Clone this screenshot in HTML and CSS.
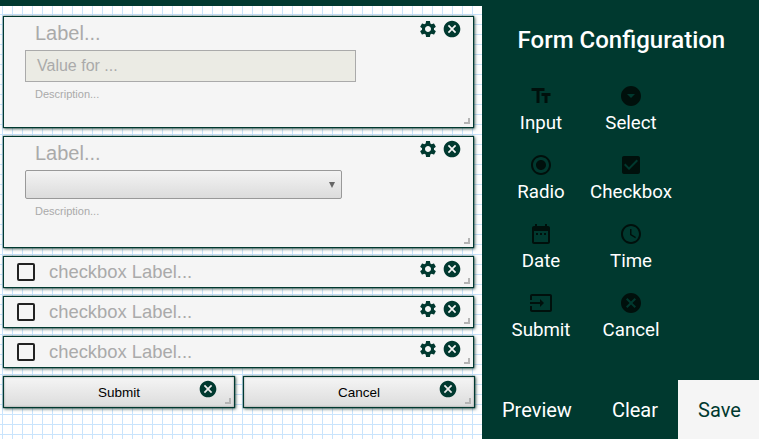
FILE: index.html
```html
<!DOCTYPE html>
<html lang="en">
<head>
    <meta charset="UTF-8">
    <meta name="viewport" content="width=device-width, initial-scale=1.0">
    <title>Form Builder</title>
    <link rel="stylesheet" href="styles.css">
</head>
<body>
    <svg class="sprite" xmlns="http://www.w3.org/2000/svg">
        <symbol id="i-settings" viewBox="0 0 24 24"><path d="M19.14 12.94c.04-.3.06-.61.06-.94 0-.32-.02-.64-.07-.94l2.03-1.58c.18-.14.23-.41.12-.61l-1.92-3.32c-.12-.22-.37-.29-.59-.22l-2.39.96c-.5-.38-1.03-.7-1.62-.94l-.36-2.54c-.04-.24-.24-.41-.48-.41h-3.84c-.24 0-.43.17-.47.41l-.36 2.54c-.59.24-1.13.57-1.62.94l-2.39-.96c-.22-.08-.47 0-.59.22L2.74 8.87c-.12.21-.08.47.12.61l2.03 1.58c-.05.3-.09.63-.09.94s.02.64.07.94l-2.03 1.58c-.18.14-.23.41-.12.61l1.92 3.32c.12.22.37.29.59.22l2.39-.96c.5.38 1.03.7 1.62.94l.36 2.54c.05.24.24.41.48.41h3.84c.24 0 .44-.17.47-.41l.36-2.54c.59-.24 1.13-.56 1.62-.94l2.39.96c.22.08.47 0 .59-.22l1.92-3.32c.12-.22.07-.47-.12-.61l-2.01-1.58zM12 15.6c-1.98 0-3.6-1.62-3.6-3.6s1.62-3.6 3.6-3.6 3.6 1.62 3.6 3.6-1.62 3.6-3.6 3.6z"/></symbol>
        <symbol id="i-cancel" viewBox="0 0 24 24"><path d="M12 2C6.47 2 2 6.47 2 12s4.47 10 10 10 10-4.47 10-10S17.53 2 12 2zm5 13.59L15.59 17 12 13.41 8.41 17 7 15.59 10.59 12 7 8.41 8.41 7 12 10.59 15.59 7 17 8.41 13.41 12 17 15.59z"/></symbol>
        <symbol id="i-text" viewBox="0 0 24 24"><path d="M2.5 4v3h5v12h3V7h5V4h-13zm19 5h-9v3h3v7h3v-7h3V9z"/></symbol>
        <symbol id="i-select" viewBox="0 0 24 24"><path d="M12 2C6.48 2 2 6.48 2 12s4.48 10 10 10 10-4.48 10-10S17.52 2 12 2zm0 12l-4-4h8l-4 4z"/></symbol>
        <symbol id="i-radio" viewBox="0 0 24 24"><path d="M12 7c-2.76 0-5 2.24-5 5s2.24 5 5 5 5-2.24 5-5-2.24-5-5-5zm0-5C6.48 2 2 6.48 2 12s4.48 10 10 10 10-4.48 10-10S17.52 2 12 2zm0 18c-4.42 0-8-3.58-8-8s3.58-8 8-8 8 3.58 8 8-3.58 8-8 8z"/></symbol>
        <symbol id="i-check" viewBox="0 0 24 24"><path d="M19 3H5c-1.11 0-2 .9-2 2v14c0 1.1.89 2 2 2h14c1.11 0 2-.9 2-2V5c0-1.1-.89-2-2-2zm-9 14l-5-5 1.41-1.41L10 14.17l7.59-7.59L19 8l-9 9z"/></symbol>
        <symbol id="i-date" viewBox="0 0 24 24"><path d="M9 11H7v2h2v-2zm4 0h-2v2h2v-2zm4 0h-2v2h2v-2zm2-7h-1V2h-2v2H8V2H6v2H5c-1.11 0-1.99.9-1.99 2L3 20c0 1.1.89 2 2 2h14c1.1 0 2-.9 2-2V6c0-1.1-.9-2-2-2zm0 16H5V9h14v11z"/></symbol>
        <symbol id="i-time" viewBox="0 0 24 24"><path d="M11.99 2C6.47 2 2 6.48 2 12s4.47 10 9.99 10C17.52 22 22 17.52 22 12S17.52 2 11.99 2zM12 20c-4.42 0-8-3.58-8-8s3.58-8 8-8 8 3.58 8 8-3.58 8-8 8zm.5-13H11v6l5.25 3.15.75-1.23-4.5-2.67z"/></symbol>
        <symbol id="i-submit" viewBox="0 0 24 24"><path d="M21 3.01H3c-1.1 0-2 .9-2 2V9h2V4.99h18v14.03H3V15H1v4.01c0 1.1.9 1.98 2 1.98h18c1.1 0 2-.88 2-1.98v-14c0-1.11-.9-2-2-2zM11 16l4-4-4-4v3H1v2h10v3z"/></symbol>
    </svg>

    <header class="top-bar"></header>

    <div class="app">
        <main class="canvas">
            <div class="field field-input">
                <div class="field-label">Label...</div>
                <div class="text-input">Value for ...</div>
                <div class="field-desc">Description...</div>
                <div class="tools">
                    <svg class="icon"><use href="#i-settings"/></svg>
                    <svg class="icon"><use href="#i-cancel"/></svg>
                </div>
                <span class="grip"></span>
            </div>

            <div class="field field-select">
                <div class="field-label">Label...</div>
                <div class="select-input"><span class="select-arrow"></span></div>
                <div class="field-desc">Description...</div>
                <div class="tools">
                    <svg class="icon"><use href="#i-settings"/></svg>
                    <svg class="icon"><use href="#i-cancel"/></svg>
                </div>
                <span class="grip"></span>
            </div>

            <div class="field field-check">
                <span class="check-box"></span>
                <span class="check-label">checkbox Label...</span>
                <div class="tools">
                    <svg class="icon"><use href="#i-settings"/></svg>
                    <svg class="icon"><use href="#i-cancel"/></svg>
                </div>
                <span class="grip"></span>
            </div>

            <div class="field field-check">
                <span class="check-box"></span>
                <span class="check-label">checkbox Label...</span>
                <div class="tools">
                    <svg class="icon"><use href="#i-settings"/></svg>
                    <svg class="icon"><use href="#i-cancel"/></svg>
                </div>
                <span class="grip"></span>
            </div>

            <div class="field field-check">
                <span class="check-box"></span>
                <span class="check-label">checkbox Label...</span>
                <div class="tools">
                    <svg class="icon"><use href="#i-settings"/></svg>
                    <svg class="icon"><use href="#i-cancel"/></svg>
                </div>
                <span class="grip"></span>
            </div>

            <div class="button-row">
                <div class="field field-button">
                    Submit
                    <div class="tools tools-button">
                        <svg class="icon"><use href="#i-cancel"/></svg>
                    </div>
                    <span class="grip"></span>
                </div>
                <div class="field field-button">
                    Cancel
                    <div class="tools tools-button">
                        <svg class="icon"><use href="#i-cancel"/></svg>
                    </div>
                    <span class="grip"></span>
                </div>
            </div>
        </main>

        <aside class="sidebar">
            <h2 class="sidebar-title">Form Configuration</h2>
            <div class="palette">
                <div class="palette-item"><svg class="palette-icon"><use href="#i-text"/></svg>Input</div>
                <div class="palette-item"><svg class="palette-icon"><use href="#i-select"/></svg>Select</div>
                <div class="palette-item"><svg class="palette-icon"><use href="#i-radio"/></svg>Radio</div>
                <div class="palette-item"><svg class="palette-icon"><use href="#i-check"/></svg>Checkbox</div>
                <div class="palette-item"><svg class="palette-icon"><use href="#i-date"/></svg>Date</div>
                <div class="palette-item"><svg class="palette-icon"><use href="#i-time"/></svg>Time</div>
                <div class="palette-item"><svg class="palette-icon"><use href="#i-submit"/></svg>Submit</div>
                <div class="palette-item"><svg class="palette-icon"><use href="#i-cancel"/></svg>Cancel</div>
            </div>
            <div class="actions">
                <button class="action">Preview</button>
                <button class="action">Clear</button>
                <button class="action action-save">Save</button>
            </div>
        </aside>
    </div>
</body>
</html>
```

FILE: styles.css
```css
html, body {
    height: 100%;
}

body {
    margin: 0;
    display: flex;
    flex-direction: column;
    overflow: hidden;
    font-family: "Liberation Sans", Arial, sans-serif;
    background: #fff;
}

.sprite {
    display: none;
}

.top-bar {
    height: 6px;
    background: #00392f;
}

.app {
    flex: 1;
    display: flex;
    min-height: 0;
}

/* canvas */
.canvas {
    flex: none;
    width: 482px;
    box-sizing: border-box;
    padding: 10px 8px 0 3px;
    display: flex;
    flex-direction: column;
    gap: 8px;
    background-color: #fff;
    background-image:
        linear-gradient(#c9e4fc 1px, transparent 1px),
        linear-gradient(90deg, #c9e4fc 1px, transparent 1px);
    background-size: 10px 10px;
    background-position: 2px 8px;
}

.field {
    position: relative;
    box-sizing: border-box;
    background: #f5f5f5;
    border: 1px solid #00392f;
    box-shadow: 0 0 1px #00392f, 1px 1px 3px rgba(0, 40, 33, 0.7);
}

.field-input,
.field-select {
    height: 112px;
    padding-left: 21px;
}

.field-label {
    margin-left: 10px;
    padding-top: 4px;
    font-size: 20px;
    line-height: 24px;
    color: #aaa;
}

.text-input {
    box-sizing: border-box;
    width: 331px;
    height: 32px;
    margin-top: 5px;
    padding-left: 11px;
    border: 1px solid #aaa;
    background: #ebebe4;
    font-size: 16px;
    line-height: 29px;
    color: #aaa;
}

.select-input {
    position: relative;
    box-sizing: border-box;
    width: 317px;
    height: 29px;
    margin-top: 5px;
    border: 1px solid #999;
    border-radius: 2px;
    background: linear-gradient(#f3f3f3, #dcdcdc);
}

.select-arrow {
    position: absolute;
    right: 6px;
    top: 11px;
    border-left: 3px solid transparent;
    border-right: 3px solid transparent;
    border-top: 6px solid #666;
}

.field-desc {
    margin: 5px 0 0 10px;
    font-size: 11px;
    line-height: 14px;
    color: #aaa;
}

.field-check {
    height: 32px;
    display: flex;
    align-items: center;
    padding-left: 13px;
}

.check-box {
    box-sizing: border-box;
    width: 18px;
    height: 18px;
    border: 2px solid #222;
    border-radius: 2px;
    background: #f5f5f5;
}

.check-label {
    margin-left: 14px;
    font-size: 18.4px;
    color: #aaa;
}

.button-row {
    display: flex;
    gap: 8px;
}

.field-button {
    flex: none;
    width: 232px;
    height: 32px;
    background: linear-gradient(#f5f5f5, #dcdcdc);
    text-align: center;
    font-size: 13.5px;
    line-height: 32px;
    color: #000;
    box-shadow: 0 0 1px #00392f, 1px 1px 3px rgba(0, 40, 33, 0.7), inset 0 0 2px rgba(0, 0, 0, 0.4);
}

/* floats over the top right corner of a field */
.tools {
    position: absolute;
    top: 2px;
    right: 11px;
    display: flex;
    gap: 4px;
}

.tools-button {
    right: 16px;
}

.icon {
    width: 20px;
    height: 20px;
    fill: #00392f;
}

.grip {
    position: absolute;
    right: 3px;
    bottom: 3px;
    box-sizing: border-box;
    width: 6px;
    height: 6px;
    border-right: 2px solid #b5b5b5;
    border-bottom: 2px solid #b5b5b5;
}

/* sidebar */
.sidebar {
    flex: 1;
    display: flex;
    flex-direction: column;
    background: #00392f;
    color: #fff;
    font-family: Roboto, sans-serif;
}

.sidebar-title {
    margin: 19px 0 0;
    text-align: center;
    font-size: 24px;
    font-weight: 500;
    line-height: 30px;
}

.palette {
    display: grid;
    grid-template-columns: 90px 90px;
    grid-auto-rows: 69px;
    justify-content: start;
    margin: 29px 0 0 14px;
}

.palette-item {
    display: flex;
    flex-direction: column;
    align-items: center;
    font-size: 18.7px;
    line-height: 22px;
    white-space: nowrap;
}

.palette-icon {
    width: 24px;
    height: 24px;
    margin-bottom: 4px;
    fill: #00100c;
}

.actions {
    margin-top: auto;
    display: flex;
    height: 59px;
}

.action {
    padding: 0 20px;
    border: none;
    background: transparent;
    color: #fff;
    font-family: Roboto, sans-serif;
    font-size: 20px;
    flex: none;
}

.action-save {
    flex: 1;
    background: #f5f5f5;
    color: #00392f;
    text-align: left;
}
```
